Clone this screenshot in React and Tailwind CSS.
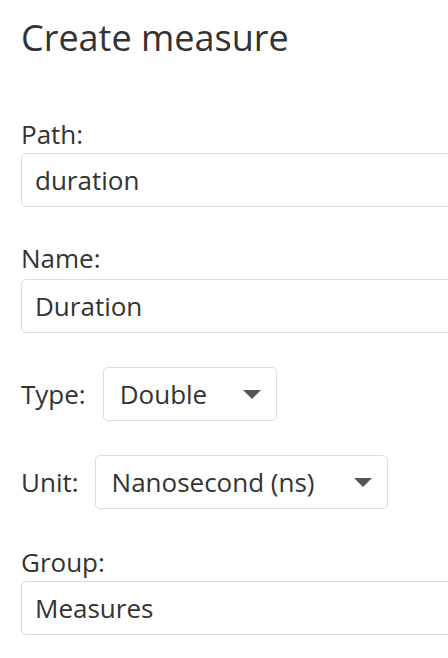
import React from 'react';

const font = { fontFamily: '"Open Sans", "Noto Sans", sans-serif' };

function Caret() {
  return (
    <svg width="18" height="9" viewBox="0 0 18 9" className="shrink-0">
      <path d="M0 0 L18 0 L9 9 Z" fill="#555555" />
    </svg>
  );
}

function TextField({ label, value, labelGap = 'mt-[1px]' }) {
  return (
    <div>
      <div className="text-[26px] leading-[36px] text-[#333333]">{label}</div>
      <div
        className={`${labelGap} w-[640px] h-[54px] border border-[#dddddd] rounded-[5px] bg-white flex items-center px-[13px] text-[26px] leading-[36px] text-[#333333]`}
      >
        {value}
      </div>
    </div>
  );
}

function SelectField({ label, value, gap, labelGap }) {
  return (
    <div className="flex items-center">
      <div className={`text-[26px] leading-[36px] text-[#333333] ${labelGap}`}>{label}</div>
      <div className="h-[54px] border border-[#dddddd] rounded-[5px] bg-white flex items-center pl-[16px] pr-[15px] text-[26px] leading-[36px] text-[#333333]">
        <span className={gap}>{value}</span>
        <Caret />
      </div>
    </div>
  );
}

export default function App() {
  return (
    <div className="w-[448px] h-[658px] overflow-hidden bg-white" style={font}>
      <div className="pl-[21px] pt-[16px]">
        <h1 className="text-[36px] leading-[44px] text-[#333333] font-normal">Create measure</h1>

        <div className="mt-[56px]">
          <TextField label="Path:" value="duration" />
        </div>

        <div className="mt-[33px]">
          <TextField label="Name:" value="Duration" labelGap="mt-[3px]" />
        </div>

        <div className="mt-[34px]">
          <SelectField label="Type:" value="Double" gap="mr-[36px]" labelGap="mr-[17px]" />
        </div>

        <div className="mt-[34px]">
          <SelectField label="Unit:" value="Nanosecond (ns)" gap="mr-[39px]" labelGap="mr-[16px]" />
        </div>

        <div className="mt-[35px]">
          <TextField label="Group:" value="Measures" />
        </div>
      </div>
    </div>
  );
}
